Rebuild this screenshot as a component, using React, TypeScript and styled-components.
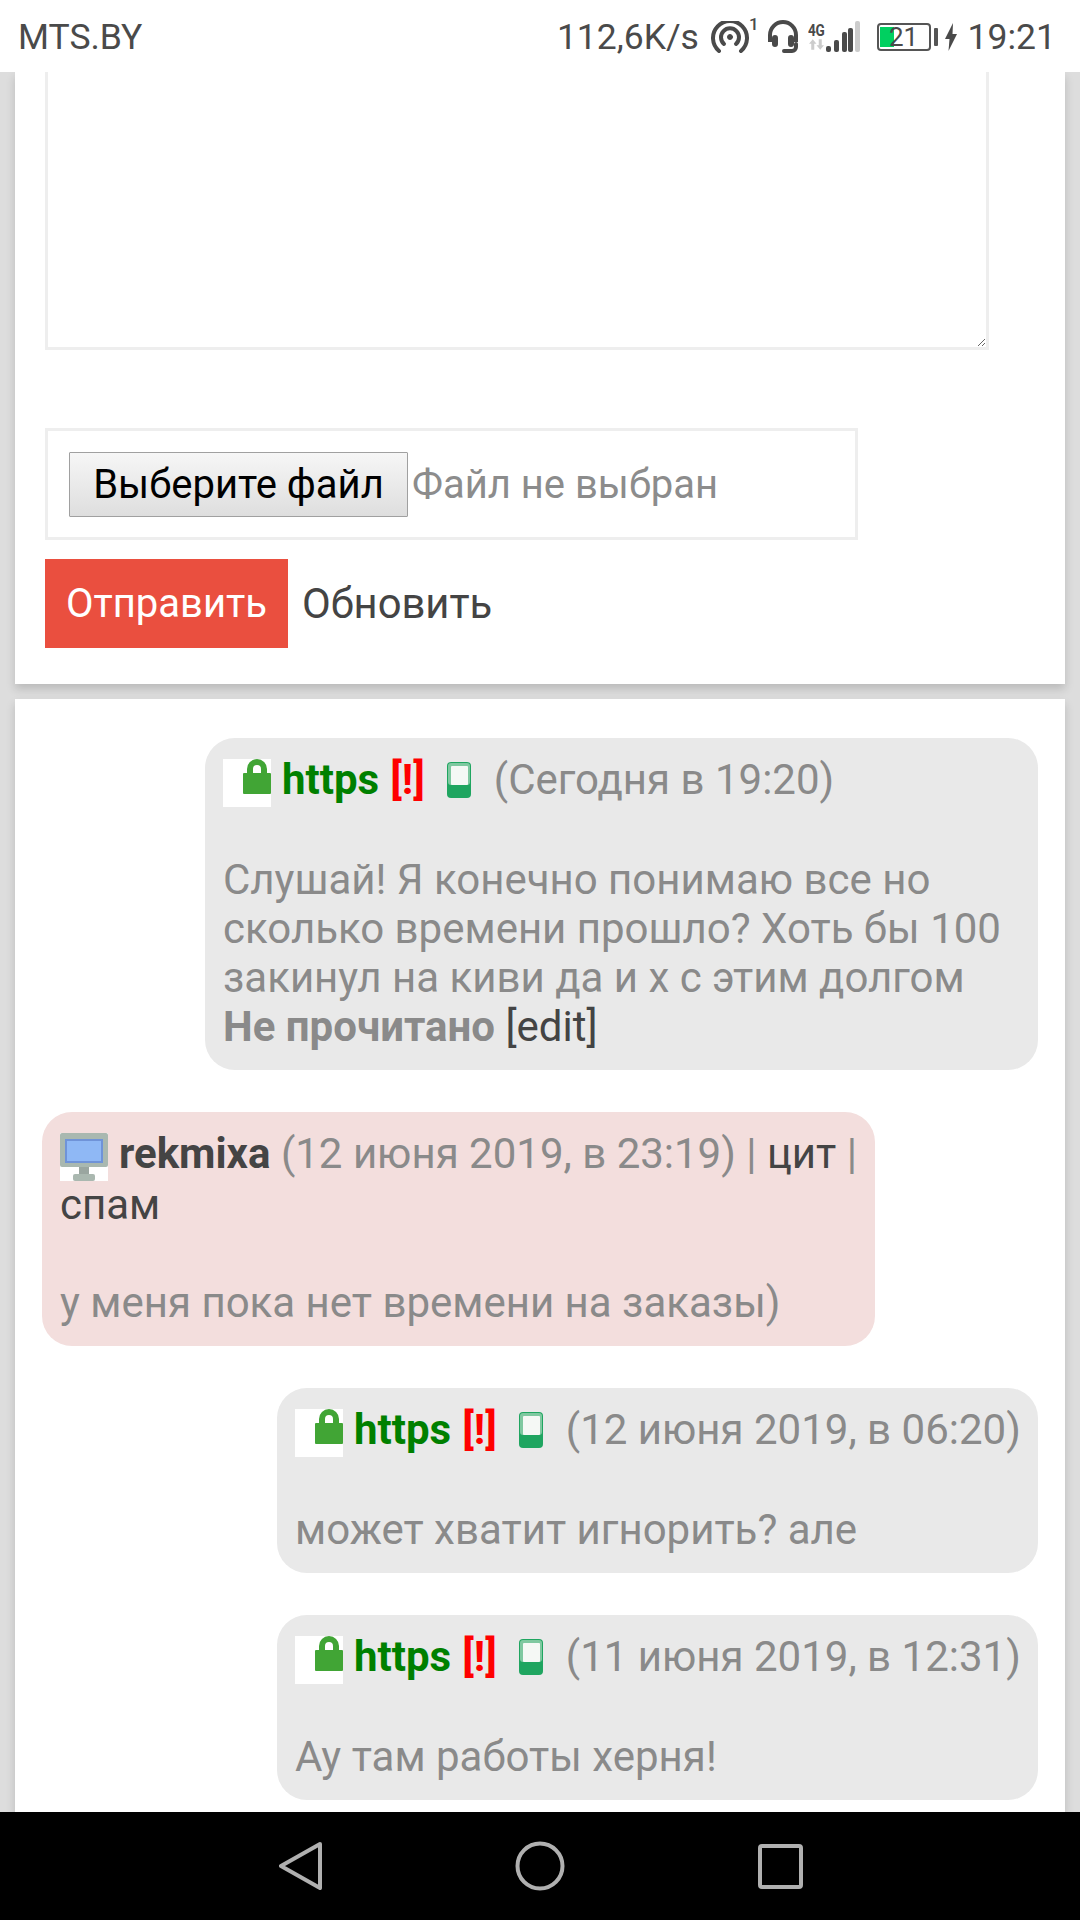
import { createGlobalStyle, styled } from 'styled-components';

const GlobalStyle = createGlobalStyle`
    html, body {
        margin: 0;
        padding: 0;
        background: #ddd;
    }
    * {
        box-sizing: border-box;
    }
`;

const Screen = styled.div`
    display: flex;
    flex-direction: column;
    width: 1080px;
    height: 1920px;
    overflow: hidden;
    font-family: Roboto, 'Noto Sans', sans-serif;
`;

const StatusBar = styled.div`
    display: flex;
    align-items: center;
    height: 72px;
    padding: 2px 24px 0 18px;
    background: #fff;
    color: #4a4a4a;
    font-size: 35.5px;
`;

const Carrier = styled.div`
    flex: 1;
`;

const StatusIcons = styled.div`
    display: flex;
    align-items: center;
`;

const Speed = styled.span`
    margin-right: 12px;
`;

const Clock = styled.span`
    margin-left: 11px;
`;

const Sup = styled.span`
    align-self: flex-start;
    margin: -2px 8px 0 0;
    font-size: 17px;
    font-weight: 500;
`;

const NetStack = styled.div`
    display: flex;
    flex-direction: column;
    align-items: center;
    width: 20px;
    margin: -3px -2px 0 8px;
`;

const NetLabel = styled.span`
    font-size: 17px;
    line-height: 18px;
    font-weight: 700;
    letter-spacing: -0.5px;
    transform: scaleX(0.8);
`;

const Battery = styled.div`
    position: relative;
    display: flex;
    align-items: center;
    justify-content: center;
    width: 54px;
    height: 28px;
    margin-left: 16px;
    border: 2px solid #555;
    border-radius: 4px;
    font-size: 26px;
    line-height: 1;
`;

const BatteryFill = styled.div`
    position: absolute;
    left: 1px;
    top: 2px;
    bottom: 2px;
    width: 14px;
    background: #00d060;
`;

const BatteryLevel = styled.span`
    position: relative;
`;

const BatteryTip = styled.div`
    width: 4px;
    height: 18px;
    margin-left: 3px;
    border-radius: 1px;
    background: #555;
`;

const BoltIcon = styled.svg`
    margin-left: 7px;
`;

const Viewport = styled.div`
    flex: 1;
    min-height: 0;
    overflow: hidden;
    padding: 0 15px;
    display: flex;
    flex-direction: column;
    gap: 15px;
`;

const Card = styled.section`
    background: #fff;
    box-shadow: 0 5px 9px rgba(0, 0, 0, 0.16);
`;

const FormCard = styled(Card)`
    height: 612px;
    flex: none;
    padding: 0 30px;
`;

const MessageArea = styled.textarea`
    display: block;
    width: 944px;
    height: 288px;
    margin-top: -10px;
    border: 3px solid #eee;
    background: #fff;
    outline: none;
`;

const FileBox = styled.div`
    display: flex;
    align-items: center;
    width: 813px;
    height: 112px;
    margin-top: 78px;
    padding-left: 21px;
    border: 3px solid #eee;
`;

const FileButton = styled.button`
    width: 339px;
    height: 65px;
    padding: 0;
    border: 1px solid #a0a0a0;
    border-radius: 1px;
    background: linear-gradient(to bottom, #f6f6f6, #dedede);
    color: #000;
    font-family: Roboto, sans-serif;
    font-size: 40px;
`;

const FileName = styled.span`
    margin-left: 4px;
    color: #8c8c8c;
    font-size: 40px;
`;

const Actions = styled.div`
    display: flex;
    align-items: center;
    margin-top: 19px;
`;

const SendButton = styled.button`
    width: 243px;
    height: 89px;
    padding: 0;
    border: 0;
    background: #ea4f3f;
    color: #fff;
    font-family: Roboto, sans-serif;
    font-size: 40px;
`;

const RefreshLink = styled.a`
    margin-left: 14px;
    color: #444;
    font-size: 41.8px;
`;

const ThreadCard = styled(Card)`
    flex: 1;
    display: flex;
    flex-direction: column;
    align-items: flex-start;
    gap: 42px;
    padding: 39px 27px 0;
`;

const Bubble = styled.article<{ $width: number; $incoming?: boolean }>`
    flex: none;
    width: ${(p) => p.$width}px;
    align-self: ${(p) => (p.$incoming ? 'flex-start' : 'flex-end')};
    padding: 17px 10px 19px 18px;
    border-radius: 30px;
    background: ${(p) => (p.$incoming ? '#f3dedd' : '#e9e9e9')};
    color: #8a8a8a;
    font-size: 42px;
    line-height: 49px;
`;

const Sender = styled.b`
    color: #008000;
`;

const Author = styled.b`
    color: #444;
`;

const Alert = styled.span`
    margin-left: 11px;
    color: #f00;
    font-weight: 700;
`;

const ReadState = styled.b`
    color: #8a8a8a;
`;

const Action = styled.a`
    color: #444;
`;

const IconSlot = styled.span`
    display: inline-block;
    width: 48px;
    height: 48px;
    margin: 4px 11px -1px 0;
    vertical-align: top;
    background: #fff;
    font-size: 0;
`;

const PhoneSlot = styled.span`
    display: inline-block;
    width: 24px;
    height: 36px;
    margin: 7px 23px 0 22px;
    vertical-align: top;
    font-size: 0;
`;

const NavBar = styled.nav`
    display: flex;
    align-items: center;
    justify-content: center;
    gap: 193px;
    flex: none;
    height: 108px;
    padding-left: 1px;
    background: #000;
`;

const LockIcon = () => (
    <IconSlot>
        <svg width="48" height="48" viewBox="0 0 48 48">
            <path d="M27 16V10a7 7 0 0 1 14 0v6" fill="none" stroke="#41a535" strokeWidth="6" />
            <rect x="20" y="14" width="28" height="21" rx="1" fill="#41a535" />
        </svg>
    </IconSlot>
);

const PhoneIcon = () => (
    <PhoneSlot>
        <svg width="24" height="36" viewBox="0 0 24 36">
            <rect x="0" y="0" width="24" height="36" rx="4" fill="#1fa560" />
            <rect x="1" y="1" width="22" height="22" rx="3" fill="#7fc8a0" />
            <rect x="4" y="4" width="17" height="19" rx="1" fill="#f5f8f5" />
        </svg>
    </PhoneSlot>
);

const MonitorIcon = () => (
    <IconSlot>
        <svg width="48" height="48" viewBox="0 0 48 48">
            <rect x="0" y="0" width="48" height="34" rx="2" fill="#a9b8b0" />
            <rect x="6" y="7" width="36" height="22" fill="#8fb8f5" stroke="#6f93d8" strokeWidth="2" />
            <rect x="19" y="34" width="10" height="7" fill="#9aa6a0" />
            <rect x="13" y="41" width="22" height="7" rx="2" fill="#aab8b0" />
        </svg>
    </IconSlot>
);

const Https = () => (
    <>
        <LockIcon />
        <Sender>https</Sender>
        <Alert>[!]</Alert>
        <PhoneIcon />
    </>
);

const App = () => {
    return (
        <>
            <GlobalStyle />
            <Screen>
                <StatusBar>
                    <Carrier>MTS.BY</Carrier>
                    <StatusIcons>
                        <Speed>112,6K/s</Speed>
                        <svg width="38" height="32" viewBox="0 0 38 32" fill="none" stroke="#4a4a4a" strokeWidth="4" strokeLinecap="round">
                            <path d="M8 30A17 17 0 1 1 30 30" />
                            <path d="M13 23A9 9 0 1 1 25 23" />
                            <circle cx="19" cy="16" r="2.5" fill="#4a4a4a" strokeWidth="1" />
                        </svg>
                        <Sup>1</Sup>
                        <svg width="32" height="34" viewBox="0 0 32 34" fill="none" stroke="#4a4a4a" strokeWidth="4">
                            <path d="M3 22V15a13 13 0 0 1 26 0v7" />
                            <path d="M29 24v3a4 4 0 0 1-4 4h-8" strokeLinecap="round" />
                            <rect x="6" y="16" width="4" height="10" rx="2" fill="#4a4a4a" strokeWidth="2" />
                            <rect x="22" y="16" width="4" height="10" rx="2" fill="#4a4a4a" strokeWidth="2" />
                        </svg>
                        <NetStack>
                            <NetLabel>4G</NetLabel>
                            <svg width="15" height="11" viewBox="0 0 20 14" fill="#ccc">
                                <path d="M5 0l5 6H7v8H3V6H0zM13 0h4v8h3l-5 6-5-6h3z" />
                            </svg>
                        </NetStack>
                        <svg width="36" height="34" viewBox="0 0 36 34">
                            <rect x="1" y="26" width="5" height="6" rx="2" fill="#4a4a4a" />
                            <rect x="9" y="20" width="5" height="12" rx="2" fill="#4a4a4a" />
                            <rect x="17" y="12" width="5" height="20" rx="2" fill="#4a4a4a" />
                            <rect x="23" y="8" width="5" height="24" rx="2" fill="#4a4a4a" />
                            <rect x="30" y="1" width="5" height="31" rx="2" fill="#ccc" />
                        </svg>
                        <Battery>
                            <BatteryFill />
                            <BatteryLevel>21</BatteryLevel>
                        </Battery>
                        <BatteryTip />
                        <BoltIcon width="12" height="28" viewBox="0 0 12 28" fill="#4a4a4a">
                            <path d="M8 0L0 16h4.5L3.5 28 12 11H7.5z" />
                        </BoltIcon>
                        <Clock>19:21</Clock>
                    </StatusIcons>
                </StatusBar>
                <Viewport>
                    <FormCard>
                        <MessageArea />
                        <FileBox>
                            <FileButton>Выберите файл</FileButton>
                            <FileName>Файл не выбран</FileName>
                        </FileBox>
                        <Actions>
                            <SendButton>Отправить</SendButton>
                            <RefreshLink>Обновить</RefreshLink>
                        </Actions>
                    </FormCard>
                    <ThreadCard>
                        <Bubble $width={833}>
                            <Https />
                            (Сегодня в 19:20)
                            <br />
                            <br />
                            Слушай! Я конечно понимаю все но
                            <br />
                            сколько времени прошло? Хоть бы 100
                            <br />
                            закинул на киви да и х с этим долгом
                            <br />
                            <ReadState>Не прочитано</ReadState> <Action>[edit]</Action>
                        </Bubble>
                        <Bubble $width={833} $incoming>
                            <MonitorIcon />
                            <Author>rekmixa</Author> <span>(12 июня 2019, в 23:19)</span> | <Action>цит</Action> |
                            <br />
                            <Action>спам</Action>
                            <br />
                            <br />у меня пока нет времени на заказы)
                        </Bubble>
                        <Bubble $width={761}>
                            <Https />
                            (12 июня 2019, в 06:20)
                            <br />
                            <br />
                            может хватит игнорить? але
                        </Bubble>
                        <Bubble $width={761}>
                            <Https />
                            (11 июня 2019, в 12:31)
                            <br />
                            <br />
                            Ау там работы херня!
                        </Bubble>
                    </ThreadCard>
                </Viewport>
                <NavBar>
                    <svg width="43" height="48" viewBox="0 0 43 48" fill="none" stroke="#b0b0b0" strokeWidth="4" strokeLinejoin="round">
                        <path d="M41 2L2 24l39 22z" />
                    </svg>
                    <svg width="50" height="50" viewBox="0 0 50 50" fill="none" stroke="#b0b0b0" strokeWidth="4">
                        <circle cx="25" cy="25" r="22.5" />
                    </svg>
                    <svg width="45" height="45" viewBox="0 0 45 45" fill="none" stroke="#b0b0b0" strokeWidth="4" strokeLinejoin="round">
                        <rect x="2" y="2" width="41" height="41" rx="2" />
                    </svg>
                </NavBar>
            </Screen>
        </>
    );
};

export default App;
